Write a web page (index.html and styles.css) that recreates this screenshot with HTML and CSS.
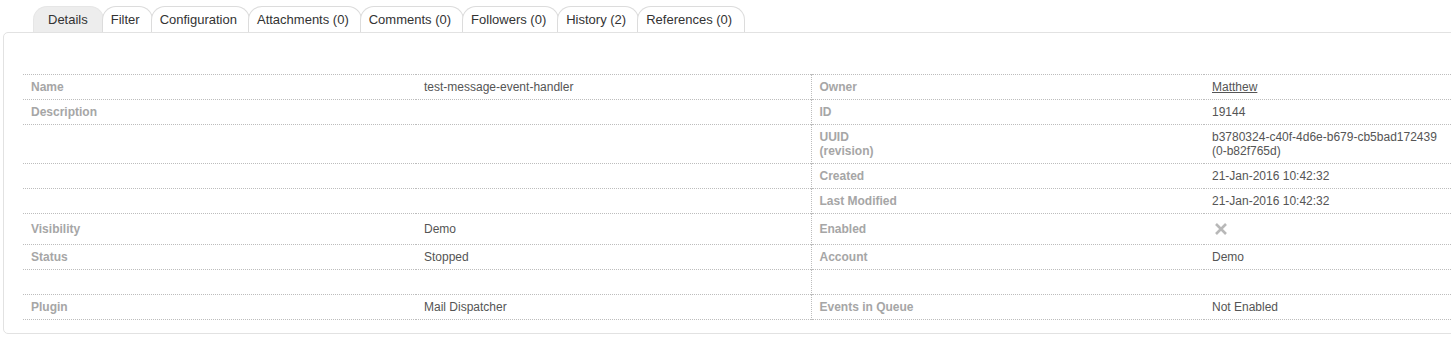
FILE: index.html
```html
<!DOCTYPE html>
<html lang="en">
<head>
    <meta charset="UTF-8">
    <title>test-message-event-handler</title>
    <link rel="stylesheet" href="styles.css">
</head>
<body>
    <div class="tabs">
        <ul class="tab-list">
            <li class="tab active">Details</li>
            <li class="tab">Filter</li>
            <li class="tab">Configuration</li>
            <li class="tab">Attachments (0)</li>
            <li class="tab">Comments (0)</li>
            <li class="tab">Followers (0)</li>
            <li class="tab">History (2)</li>
            <li class="tab">References (0)</li>
        </ul>
        <div class="panel">
            <table class="details">
                <colgroup>
                    <col class="c1"><col class="c2"><col class="c3"><col class="c4">
                </colgroup>
                <tr>
                    <th>Name</th><td>test-message-event-handler</td>
                    <th class="split">Owner</th><td><a href="#">Matthew </a></td>
                </tr>
                <tr>
                    <th>Description</th><td></td>
                    <th class="split">ID</th><td>19144</td>
                </tr>
                <tr>
                    <th></th><td></td>
                    <th class="split">UUID<br>(revision)</th><td>b3780324-c40f-4d6e-b679-cb5bad172439<br>(0-b82f765d)</td>
                </tr>
                <tr>
                    <th></th><td></td>
                    <th class="split">Created</th><td>21-Jan-2016 10:42:32</td>
                </tr>
                <tr>
                    <th></th><td></td>
                    <th class="split">Last Modified</th><td>21-Jan-2016 10:42:32</td>
                </tr>
                <tr class="tall">
                    <th>Visibility</th><td>Demo</td>
                    <th class="split">Enabled</th>
                    <td>
                        <svg class="cross" width="14" height="14" viewBox="0 0 14 14">
                            <path d="M2 2 L12 12 M12 2 L2 12" stroke="#b8b8b8" stroke-width="2.6" fill="none"/>
                        </svg>
                    </td>
                </tr>
                <tr>
                    <th>Status</th><td>Stopped</td>
                    <th class="split">Account</th><td>Demo</td>
                </tr>
                <tr>
                    <th>&nbsp;</th><td>&nbsp;</td>
                    <th class="split">&nbsp;</th><td>&nbsp;</td>
                </tr>
                <tr>
                    <th>Plugin</th><td>Mail Dispatcher</td>
                    <th class="split">Events in Queue</th><td>Not Enabled</td>
                </tr>
            </table>
        </div>
    </div>
</body>
</html>
```

FILE: styles.css
```css
body {
    margin: 0;
    font-family: "Liberation Sans", Arial, sans-serif;
    background-color: #fff;
    overflow: hidden;
}
.tabs {
    padding: 6px 0 0 3px;
}
.tab-list {
    list-style: none;
    margin: 0;
    padding: 0 0 0 30px;
    display: flex;
    position: relative;
    z-index: 1;
}
.tab {
    font-size: 13px;
    color: #333;
    height: 25px;
    line-height: 25px;
    padding: 0 12px 0 8px;
    border: 1px solid #dcdcdc;
    border-bottom: none;
    border-radius: 14px 14px 0 0;
    margin-right: -2px;
    background-color: #fff;
}
.tab.active {
    background-color: #ededed;
    border-color: #e6e6e6;
    padding: 0 15px 0 14px;
}
.panel {
    width: 1620px;
    border: 1px solid #e2e2e2;
    border-radius: 5px;
    padding: 41px 19px 13px 19px;
    background-color: #fff;
}
.details {
    border-collapse: collapse;
    table-layout: fixed;
    width: 1578px;
    font-size: 12px;
    line-height: 14px;
    border-top: 1px dotted #bdbdbd;
}
.c1 { width: 393px; }
.c2 { width: 395px; }
.c3 { width: 393px; }
.details tr {
    border-bottom: 1px dotted #bdbdbd;
}
.details th,
.details td {
    padding: 5px 8px;
    text-align: left;
    vertical-align: middle;
    white-space: nowrap;
}
.details th {
    color: #a6a6a6;
    font-weight: bold;
}
.details td {
    color: #555;
}
.details th.split {
    border-left: 1px dotted #bdbdbd;
}
.details a {
    color: #555;
    text-decoration: underline;
}
.details tr.tall td,
.details tr.tall th {
    padding-top: 8px;
    padding-bottom: 8px;
}
.cross {
    display: block;
    margin-left: 2px;
}
```
